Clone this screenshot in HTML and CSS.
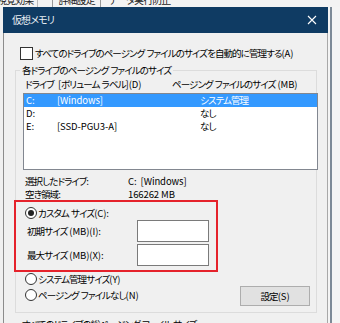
FILE: index.html
```html
<!DOCTYPE html>
<html lang="ja">
<head>
<meta charset="utf-8">
<link rel="stylesheet" href="styles.css">
</head>
<body>
<div class="screen">
  <div class="tabs">
    <div class="tabs-inner">
      <span class="tab t1">視覚効果</span>
      <span class="tab t2">詳細設定</span>
      <span class="tab t3">データ実行防止</span>
    </div>
  </div>
  <div class="main">
    <div class="dialog">
      <div class="titlebar">
        <span class="title">仮想メモリ</span>
        <svg class="close" width="10" height="10" viewBox="0 0 10 10"><path d="M1 1 L9 9 M9 1 L1 9" stroke="#ffffff" stroke-width="1.1" fill="none"/></svg>
      </div>
      <div class="body">
        <div class="check-row">
          <span class="checkbox"></span>
          <span class="label">すべてのドライブのページング<span class="lat"> </span>ファイルのサイズを自動的に管理する<span class="lat">(A)</span></span>
        </div>
        <div class="group">
          <div class="legend">各ドライブのページング<span class="lat"> </span>ファイルのサイズ</div>
          <div class="header">
            <span class="h1">ドライブ<span class="lat">&nbsp;&nbsp;[</span>ボリューム<span class="lat"> </span>ラベル<span class="lat">](D)</span></span>
            <span class="h2">ページング<span class="lat"> </span>ファイルのサイズ<span class="lat"> (MB)</span></span>
          </div>
          <div class="list">
            <div class="item sel"><span class="c1 lat">C:</span><span class="c2 lat">[Windows]</span><span class="c3">システム管理</span></div>
            <div class="item"><span class="c1 lat">D:</span><span class="c2"></span><span class="c3">なし</span></div>
            <div class="item"><span class="c1 lat">E:</span><span class="c2 lat">[SSD-PGU3-A]</span><span class="c3">なし</span></div>
          </div>
          <div class="info">
            <span>選択したドライブ:</span><span class="lat">C:&nbsp;&nbsp;[Windows]</span>
            <span>空き領域:</span><span class="lat">166262 MB</span>
          </div>
          <div class="highlight">
            <div class="radio-row first"><span class="radio on"></span><span>カスタム<span class="lat"> </span>サイズ<span class="lat">(C):</span></span></div>
            <div class="size-grid">
              <span class="size-label">初期サイズ<span class="lat"> (MB)(I):</span></span><span class="textbox"></span>
              <span class="size-label">最大サイズ<span class="lat"> (MB)(X):</span></span><span class="textbox"></span>
            </div>
          </div>
          <div class="bottom">
            <div class="radios">
              <div class="radio-row"><span class="radio"></span><span>システム管理サイズ<span class="lat">(Y)</span></span></div>
              <div class="radio-row"><span class="radio"></span><span>ページング<span class="lat"> </span>ファイルなし<span class="lat">(N)</span></span></div>
            </div>
            <div class="button">設定<span class="lat">(S)</span></div>
          </div>
        </div>
        <div class="total">すべてのドライブの総ページング<span class="lat"> </span>ファイル<span class="lat"> </span>サイズ</div>
      </div>
    </div>
    <div class="side"><div class="side-line"></div></div>
  </div>
</div>
</body>
</html>
```
FILE: styles.css
```css
* { box-sizing: border-box; }
html, body { margin: 0; padding: 0; }
body {
  width: 340px;
  height: 323px;
  overflow: hidden;
  background: #f0f0f0;
  font-family: "Noto Sans CJK JP", "Noto Sans", sans-serif;
  font-feature-settings: "palt";
  font-size: 9.5px;
  letter-spacing: -0.9px;
  color: #000;
}
.lat { letter-spacing: -0.1px; }
.screen { width: 340px; height: 323px; overflow: hidden; display: flex; flex-direction: column; }

.tabs { height: 7px; overflow: hidden; background: #f3f3f3; flex: none; }
.tabs-inner { margin-top: -8px; display: flex; height: 15px; align-items: center; }
.tab { line-height: 15px; color: #222; white-space: nowrap; font-size: 10px; }
.t1 { margin-left: -3px; padding-right: 4px; border-right: 1px solid #bbb; }
.t2 { margin-left: 14px; padding: 0 5px; border: 1px solid #999; }
.t3 { margin-left: 8px; }

.main { display: flex; flex: 1; min-height: 0; }
.dialog {
  margin-left: 3px;
  width: 325px;
  display: flex;
  flex-direction: column;
  border-left: 1px solid #8c8c8c;
  border-right: 1px solid #a8a8a8;
  background: #f0f0f0;
}
.titlebar {
  height: 26px;
  margin: 0 -1px;
  background: #0f3b63;
  color: #fff;
  display: flex;
  align-items: center;
  justify-content: space-between;
  padding: 0 9px 1px 9px;
  flex: none;
}
.title { font-size: 10px; color: #e8eef4; }
.close { margin-right: 2px; }

.body { padding-top: 14px; }
.check-row { display: flex; align-items: center; height: 13px; margin-left: 16px; }
.checkbox { width: 13px; height: 13px; border: 1px solid #333; background: #fff; flex: none; }
.check-row .label { margin-left: 2px; white-space: nowrap; line-height: 13px; }

.group {
  margin: 10px 10px 0 11px;
  border: 1px solid #dcdcdc;
  padding: 0 0 6px 0;
}
.legend {
  width: fit-content;
  margin: -7px 0 0 4px;
  padding: 0 2px;
  background: #f0f0f0;
  line-height: 13px;
  white-space: nowrap;
}
.header { display: flex; margin-top: 1px; line-height: 13px; white-space: nowrap; }
.h1 { margin-left: 9px; width: 147px; flex: none; }
.list {
  margin: 2px -2px 0 7px;
  height: 77px;
  border: 1px solid #828790;
  background: #fff;
}
.item { display: flex; height: 13px; line-height: 13px; white-space: nowrap; }
.item.sel { background: #3399ff; color: #fff; }
.c1 { margin-left: 2px; width: 31px; flex: none; }
.c2 { width: 143px; flex: none; }

.info {
  margin: 5px 0 0 9px;
  display: grid;
  grid-template-columns: 103px auto;
  line-height: 12.5px;
  white-space: nowrap;
}

.highlight {
  margin: 0 0 0 -2px;
  width: 204px;
  height: 72px;
  border: 2px solid #e5222b;
  padding: 4px 7px 4px 11px;
}
.radio-row { display: flex; align-items: center; height: 14px; white-space: nowrap; }
.radio-row.first { margin-left: -2px; }
.radio {
  width: 12px; height: 12px; border: 1px solid #333; border-radius: 50%;
  background: #fff; flex: none; margin-right: 1px;
  display: flex; align-items: center; justify-content: center;
}
.radio.on::after { content: ""; width: 6px; height: 6px; border-radius: 50%; background: #222; }
.size-grid {
  display: grid;
  grid-template-columns: 1fr 72px;
  row-gap: 2px;
  align-items: center;
  white-space: nowrap;
}
.textbox { height: 22px; border: 1px solid #7a7a7a; background: #fff; }

.bottom { display: flex; justify-content: space-between; margin-top: -1px; }
.radios { padding-left: 9px; }
.radios .radio-row { height: 16px; }
.button {
  margin: 15px 6px 0 0;
  width: 70px; height: 20px;
  background: #e1e1e1;
  border: 1px solid #adadad;
  display: flex; align-items: center; justify-content: center;
  line-height: 18px;
}
.total { margin: 4px 0 0 18px; line-height: 14px; white-space: nowrap; }

.side { flex: 1; background: #f4f4f4; display: flex; }
.side-line { margin-left: 2px; width: 2px; background: #7d8a97; }
```
